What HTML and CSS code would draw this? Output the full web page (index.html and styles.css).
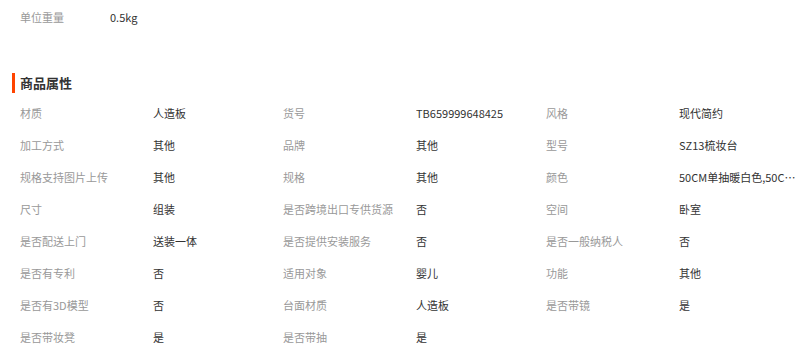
FILE: index.html
```html
<!DOCTYPE html>
<html lang="zh-CN">
<head>
<meta charset="utf-8">
<link rel="stylesheet" href="styles.css">
</head>
<body>
<div class="page">
  <div class="basic">
    <span class="basic-label">单位重量</span>
    <span class="basic-value">0.5kg</span>
  </div>
  <h3 class="title">商品属性</h3>
  <ul class="attrs">
    <li class="attr"><span class="k">材质</span><span class="v">人造板</span></li>
    <li class="attr"><span class="k">货号</span><span class="v">TB659999648425</span></li>
    <li class="attr"><span class="k">风格</span><span class="v">现代简约</span></li>
    <li class="attr"><span class="k">加工方式</span><span class="v">其他</span></li>
    <li class="attr"><span class="k">品牌</span><span class="v">其他</span></li>
    <li class="attr"><span class="k">型号</span><span class="v">SZ13梳妆台</span></li>
    <li class="attr"><span class="k">规格支持图片上传</span><span class="v">其他</span></li>
    <li class="attr"><span class="k">规格</span><span class="v">其他</span></li>
    <li class="attr"><span class="k">颜色</span><span class="v">50CM单抽暖白色,50CM单抽胡桃色</span></li>
    <li class="attr"><span class="k">尺寸</span><span class="v">组装</span></li>
    <li class="attr"><span class="k">是否跨境出口专供货源</span><span class="v">否</span></li>
    <li class="attr"><span class="k">空间</span><span class="v">卧室</span></li>
    <li class="attr"><span class="k">是否配送上门</span><span class="v">送装一体</span></li>
    <li class="attr"><span class="k">是否提供安装服务</span><span class="v">否</span></li>
    <li class="attr"><span class="k">是否一般纳税人</span><span class="v">否</span></li>
    <li class="attr"><span class="k">是否有专利</span><span class="v">否</span></li>
    <li class="attr"><span class="k">适用对象</span><span class="v">婴儿</span></li>
    <li class="attr"><span class="k">功能</span><span class="v">其他</span></li>
    <li class="attr"><span class="k">是否有3D模型</span><span class="v">否</span></li>
    <li class="attr"><span class="k">台面材质</span><span class="v">人造板</span></li>
    <li class="attr"><span class="k">是否带镜</span><span class="v">是</span></li>
    <li class="attr"><span class="k">是否带妆凳</span><span class="v">是</span></li>
    <li class="attr"><span class="k">是否带抽</span><span class="v">是</span></li>
  </ul>
</div>
</body>
</html>
```
FILE: styles.css
```css
html, body {
  margin: 0;
  padding: 0;
  background: #fff;
}
.page {
  font-family: "Noto Sans CJK SC", "Noto Sans", sans-serif;
  font-size: 11px;
  color: #333;
  padding-top: 1px;
}
.basic {
  display: flex;
  height: 32px;
  line-height: 32px;
  padding-left: 20px;
}
.basic-label {
  width: 90px;
  color: #999;
}
.basic-value {
  color: #333;
}
.title {
  margin: 40px 0 4px 12px;
  padding-left: 5px;
  border-left: 3px solid #ff4400;
  height: 20px;
  line-height: 20px;
  font-size: 13px;
  font-weight: bold;
  color: #333;
  display: flex;
  align-items: center;
}
.attrs {
  list-style: none;
  margin: 0;
  padding: 0 0 0 20px;
  display: grid;
  grid-template-columns: repeat(3, 263px);
}
.attr {
  display: flex;
  height: 32px;
  line-height: 32px;
}
.k {
  width: 133px;
  flex: none;
  color: #999;
  white-space: nowrap;
}
.v {
  width: 121px;
  flex: none;
  color: #333;
  white-space: nowrap;
  overflow: hidden;
  text-overflow: ellipsis;
}
```
